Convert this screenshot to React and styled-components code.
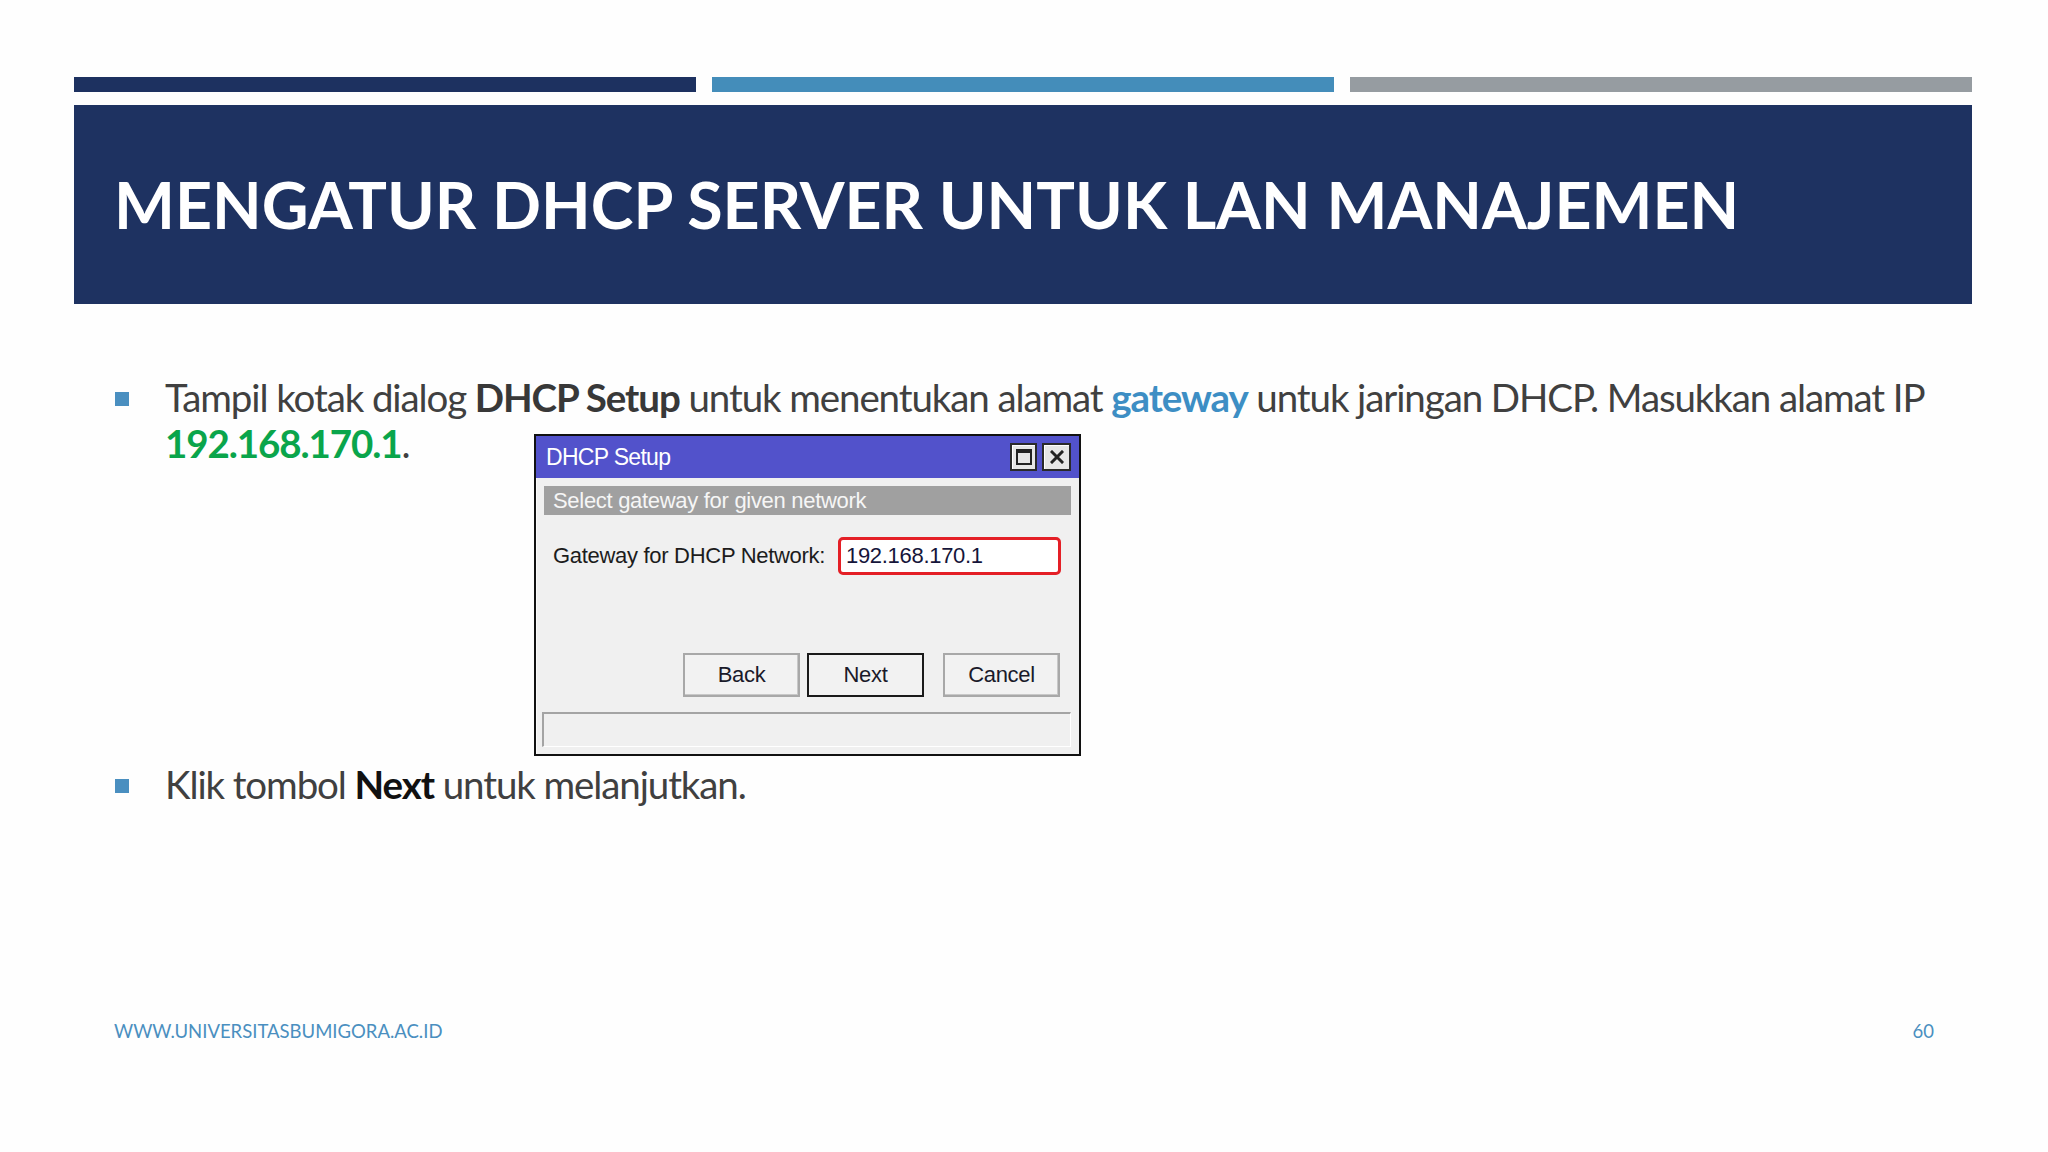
import React from "react";
import styled, { createGlobalStyle } from "styled-components";

const Global = createGlobalStyle`
  html, body { margin: 0; padding: 0; background: #ffffff; }
  * { box-sizing: border-box; }
`;

const Slide = styled.div`
  width: 2048px;
  height: 1152px;
  display: flex;
  flex-direction: column;
  padding: 77px 76px 0 74px;
  font-family: "Lato", "Open Sans", sans-serif;
  background: #fefefe;
  overflow: hidden;
`;

const Bars = styled.div`
  display: grid;
  grid-template-columns: repeat(3, 1fr);
  gap: 16px;
  height: 15px;
`;

const Bar = styled.div`
  background: ${(p) => p.$color};
`;

const Header = styled.header`
  margin-top: 13px;
  height: 199px;
  background: #1e3261;
  display: flex;
  align-items: center;
  padding-left: 40px;
`;

const Title = styled.h1`
  margin: 0;
  color: #ffffff;
  font-family: "Lato", sans-serif;
  font-weight: 700;
  font-size: 64.5px;
  letter-spacing: 0px;
  line-height: 1;
`;

const Content = styled.div`
  margin-top: 69px;
  display: flex;
  flex-direction: column;
`;

const Item = styled.div`
  display: flex;
  align-items: flex-start;
  margin-top: ${(p) => p.$mt || 0}px;
`;

const Square = styled.span`
  flex: none;
  width: 14px;
  height: 14px;
  background: #4a8fc0;
  margin: 19px 36px 0 41px;
`;

const Para = styled.p`
  margin: 0;
  font-size: 38.5px;
  line-height: 46px;
  color: #404040;
  letter-spacing: -1.1px;
  white-space: nowrap;
  padding-top: 1px;
`;

const Strong = styled.b`
  font-weight: 700;
  color: ${(p) => p.$color || "#383838"};
`;

const Figure = styled.div`
  margin: -32px 0 0 460px;
  width: 547px;
  height: 322px;
  border: 2px solid #111;
  background: #f0f0f0;
  display: flex;
  flex-direction: column;
  font-family: "Liberation Sans", Arial, sans-serif;
  font-size: 22px;
  letter-spacing: -0.3px;
  color: #1c1c1c;
`;

const TitleBar = styled.div`
  height: 42px;
  flex: none;
  background: #5252cb;
  display: flex;
  align-items: center;
  justify-content: space-between;
  padding: 0 8px 0 10px;
  color: #fff;
  font-size: 23px;
  letter-spacing: -0.7px;
`;

const WinButtons = styled.div`
  display: flex;
  gap: 5px;
`;

const WinButton = styled.div`
  width: ${(p) => p.$w}px;
  height: 28px;
  background: #e6e6e6;
  border: 2px solid #2a2a2a;
  box-shadow: inset 1px 1px 0 #ffffff;
  display: flex;
  align-items: center;
  justify-content: center;
`;

const Body = styled.div`
  flex: 1;
  display: flex;
  flex-direction: column;
  padding: 8px 8px 0 7px;
  border-left: 1px solid #fafafa;
`;

const Band = styled.div`
  height: 29px;
  background: #a0a0a0;
  color: #f6f6f6;
  display: flex;
  align-items: center;
  padding-left: 9px;
`;

const FieldRow = styled.div`
  margin-top: 22px;
  display: flex;
  align-items: center;
  padding-left: 9px;
`;

const Label = styled.span`
  width: 273px;
  white-space: nowrap;
`;

const Input = styled.div`
  margin-left: 12px;
  width: 223px;
  height: 38px;
  border: 3px solid #e41f26;
  border-radius: 5px;
  background: #ffffff;
  display: flex;
  align-items: center;
  padding-left: 5px;
  color: #15153a;
`;

const ButtonRow = styled.div`
  margin-top: 78px;
  display: flex;
  justify-content: flex-end;
  padding-right: 11px;
`;

const Btn = styled.div`
  width: 117px;
  height: 44px;
  margin-left: ${(p) => p.$ml}px;
  border: 2px solid ${(p) => (p.$primary ? "#1a1a1a" : "#a8a8a8")};
  background: #f2f2f2;
  box-shadow: ${(p) => (p.$primary ? "none" : "inset -1px -1px 0 #c8c8c8")};
  display: flex;
  align-items: center;
  justify-content: center;
  color: #1a1a2a;
`;

const Status = styled.div`
  margin-top: 15px;
  margin-left: -2px;
  height: 35px;
  border-top: 2px solid #a4a4a4;
  border-left: 2px solid #a4a4a4;
  border-right: 1px solid #ffffff;
  border-bottom: 1px solid #ffffff;
  background: #f0f0f0;
`;

const Footer = styled.footer`
  margin-top: auto;
  margin-bottom: 111px;
  display: flex;
  justify-content: space-between;
  padding: 0 38px 0 40px;
  font-size: 18.5px;
  line-height: 20px;
  color: #4a8fc0;
`;

function MaxIcon() {
  return (
    <svg width="16" height="16" viewBox="0 0 16 16">
      <rect x="1" y="1" width="14" height="14" fill="none" stroke="#222" strokeWidth="2" />
      <rect x="1" y="1" width="14" height="3" fill="#222" />
    </svg>
  );
}

function CloseIcon() {
  return (
    <svg width="14" height="14" viewBox="0 0 14 14">
      <path d="M2 2 L12 12 M12 2 L2 12" stroke="#222" strokeWidth="3" strokeLinecap="square" />
    </svg>
  );
}

export default function App() {
  return (
    <>
      <Global />
      <Slide>
        <Bars>
          <Bar $color="#1d3160" />
          <Bar $color="#448dba" />
          <Bar $color="#969ca1" />
        </Bars>
        <Header>
          <Title>MENGATUR DHCP SERVER UNTUK LAN MANAJEMEN</Title>
        </Header>
        <Content>
          <Item>
            <Square />
            <Para>
              Tampil kotak dialog <Strong>DHCP Setup</Strong> untuk menentukan alamat{" "}
              <Strong $color="#3d8ec4">gateway</Strong> untuk jaringan DHCP. Masukkan alamat IP
              <br />
              <Strong $color="#0aa54b">192.168.170.1</Strong>.
            </Para>
          </Item>
          <Figure>
            <TitleBar>
              <span>DHCP Setup</span>
              <WinButtons>
                <WinButton $w={27}>
                  <MaxIcon />
                </WinButton>
                <WinButton $w={29}>
                  <CloseIcon />
                </WinButton>
              </WinButtons>
            </TitleBar>
            <Body>
              <Band>Select gateway for given network</Band>
              <FieldRow>
                <Label>Gateway for DHCP Network:</Label>
                <Input>192.168.170.1</Input>
              </FieldRow>
              <ButtonRow>
                <Btn $ml={0}>Back</Btn>
                <Btn $ml={7} $primary>
                  Next
                </Btn>
                <Btn $ml={19}>Cancel</Btn>
              </ButtonRow>
              <Status />
            </Body>
          </Figure>
          <Item $mt={4}>
            <Square />
            <Para>
              Klik tombol <Strong $color="#111">Next</Strong> untuk melanjutkan.
            </Para>
          </Item>
        </Content>
        <Footer>
          <span>WWW.UNIVERSITASBUMIGORA.AC.ID</span>
          <span>60</span>
        </Footer>
      </Slide>
    </>
  );
}
